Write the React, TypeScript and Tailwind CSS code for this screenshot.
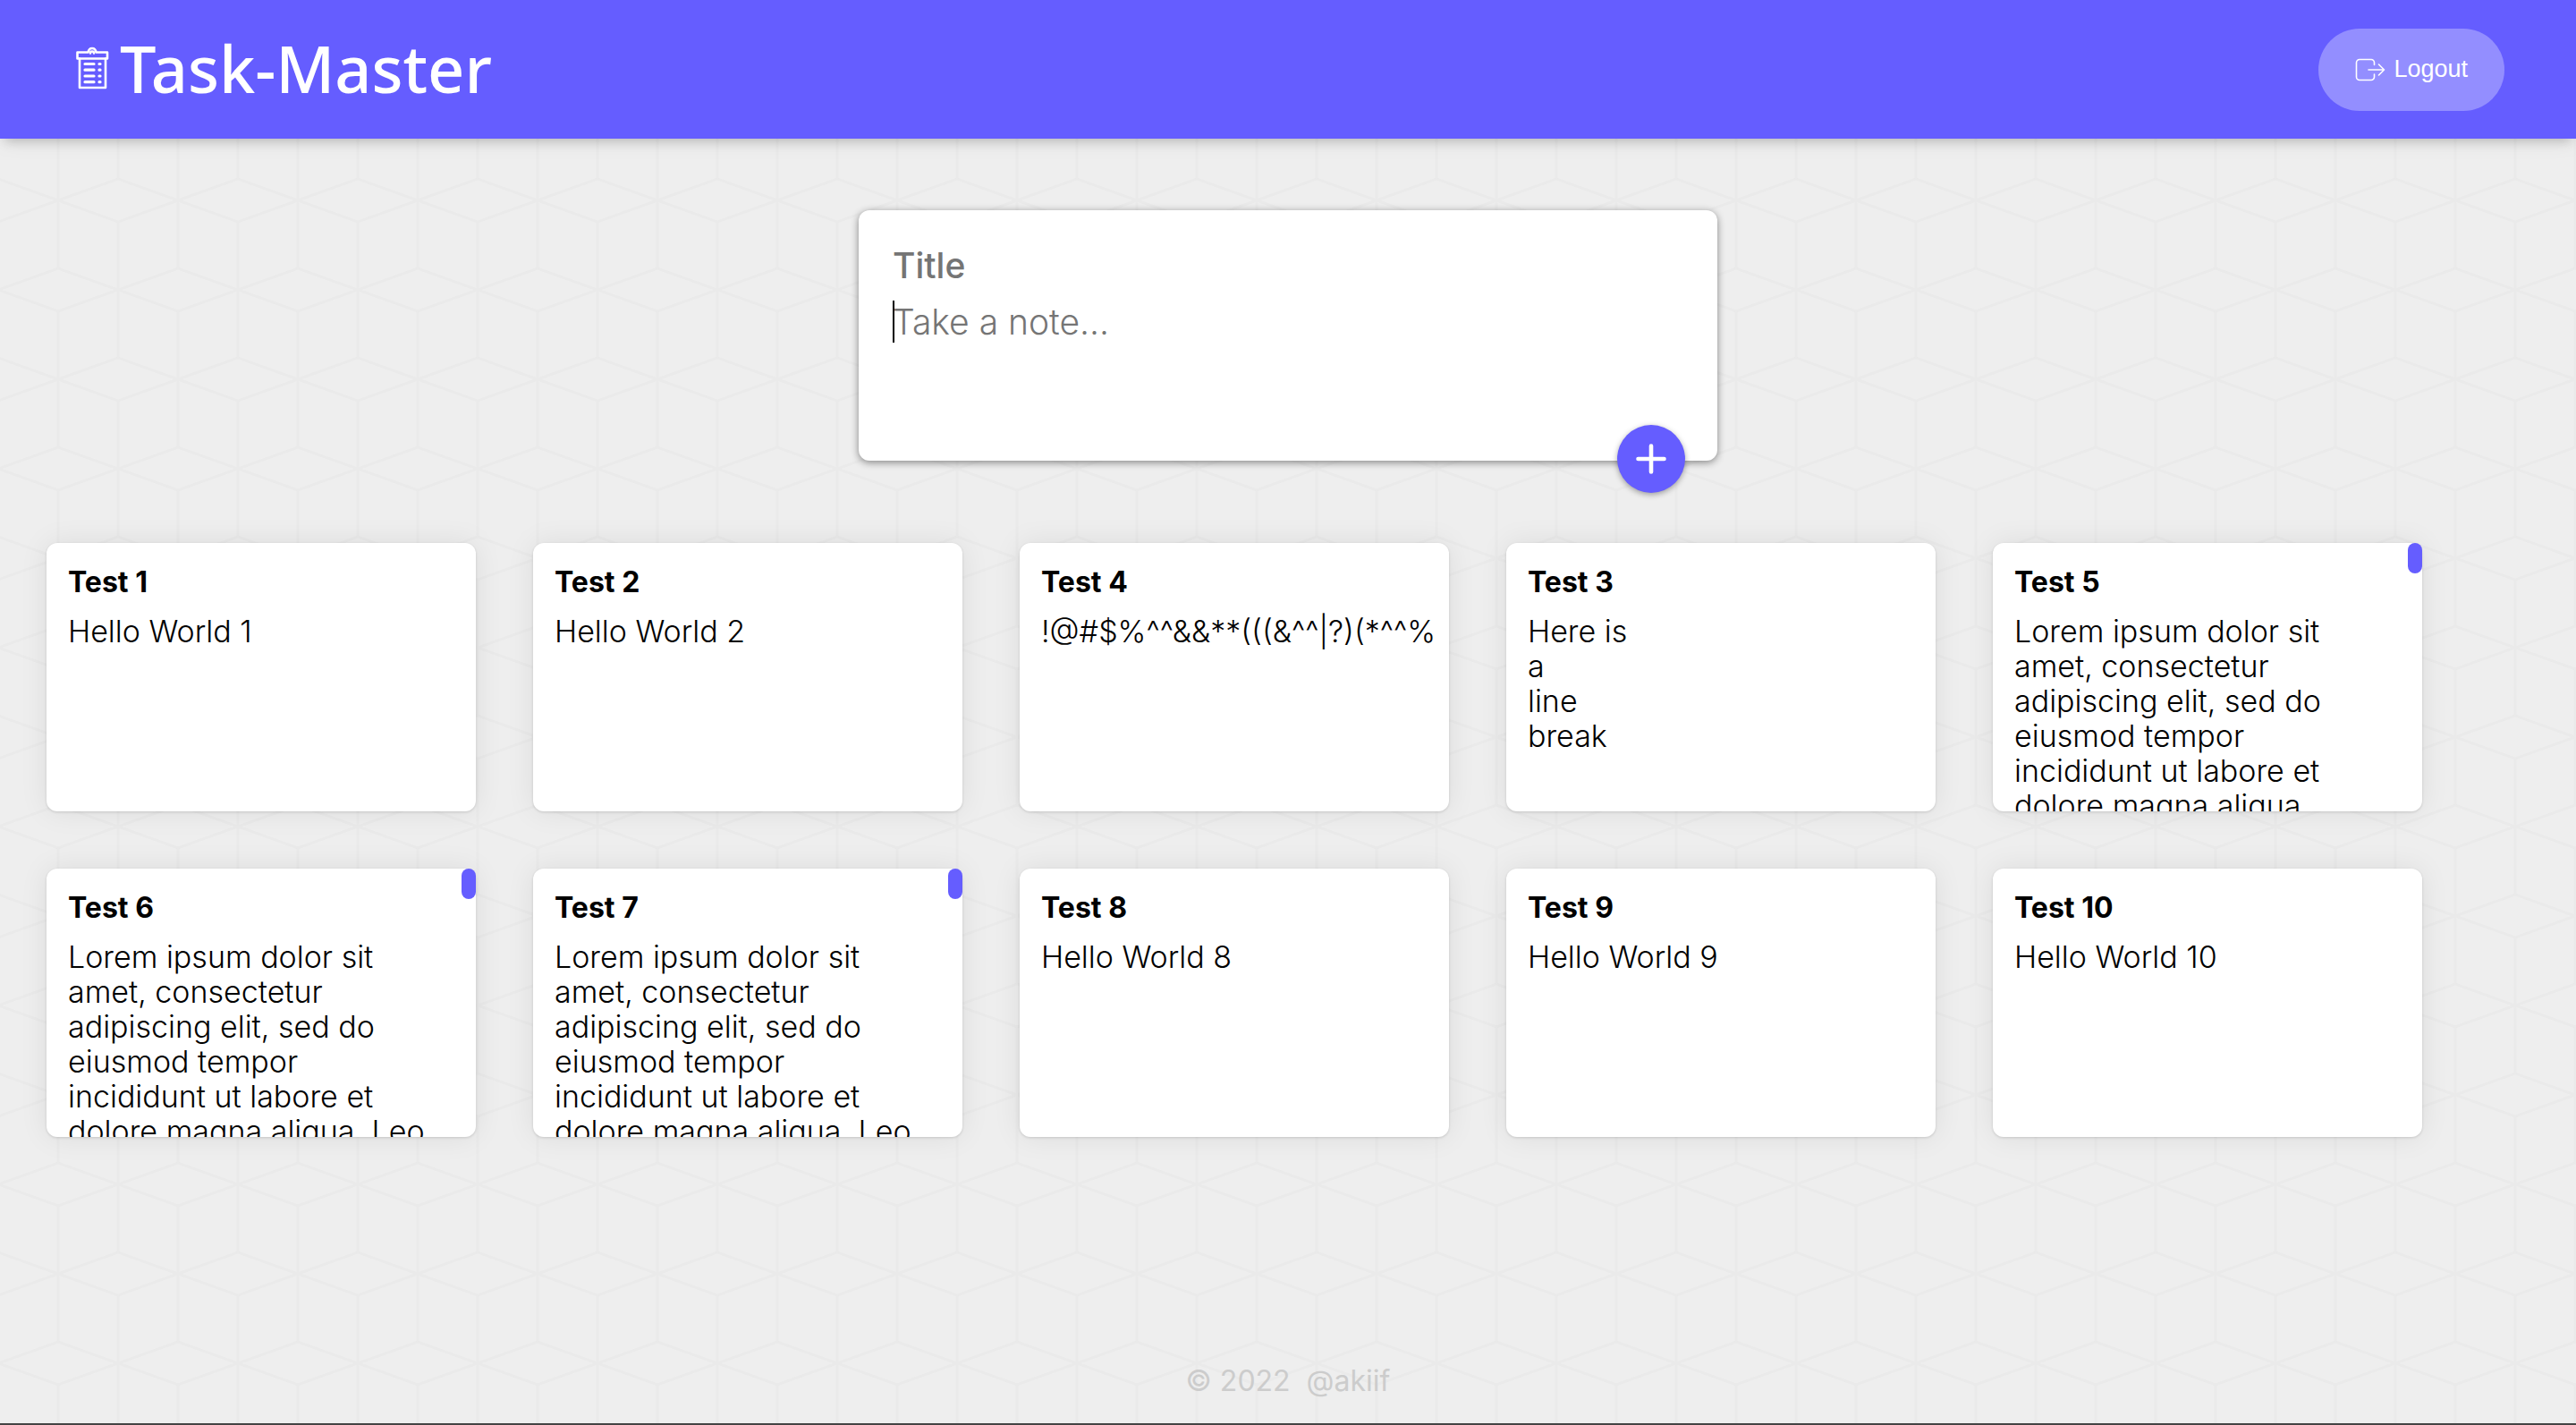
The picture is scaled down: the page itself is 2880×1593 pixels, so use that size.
type Note = { title: string; content: string; scrolls?: boolean };

const lorem =
  "Lorem ipsum dolor sit amet, consectetur adipiscing elit, sed do eiusmod tempor incididunt ut labore et dolore magna aliqua.";

const notes: Note[] = [
  { title: "Test 1", content: "Hello World 1" },
  { title: "Test 2", content: "Hello World 2" },
  { title: "Test 4", content: "!@#$%^^&&**(((&^^|?)(*^^%" },
  { title: "Test 3", content: "Here is\na\nline\nbreak" },
  { title: "Test 5", content: lorem, scrolls: true },
  { title: "Test 6", content: lorem + " Leo", scrolls: true },
  { title: "Test 7", content: lorem + " Leo", scrolls: true },
  { title: "Test 8", content: "Hello World 8" },
  { title: "Test 9", content: "Hello World 9" },
  { title: "Test 10", content: "Hello World 10" },
];

function CubePattern() {
  return (
    <svg className="absolute inset-0 -z-10 h-full w-full" aria-hidden="true">
      <defs>
        <pattern id="cubes" x="-2" y="124" width="134" height="200" patternUnits="userSpaceOnUse">
          <g fill="none" stroke="#eaeaea" strokeWidth="3">
            {/* diamonds centred on the tile's left and right edges */}
            <path d="M-67 100L0 76L67 100L0 124ZM67 100L134 76L201 100L134 124Z" />
            {/* diamonds centred in the tile, split over its top and bottom edge */}
            <path d="M0 0L67 24L134 0M0 200L67 176L134 200" />
            <path d="M67 24V176M0 0V76M134 0V76M0 124V200M134 124V200" />
          </g>
        </pattern>
      </defs>
      <rect width="100%" height="100%" fill="url(#cubes)" />
    </svg>
  );
}

function ClipboardIcon() {
  return (
    <svg className="h-[48px] w-[38px]" viewBox="0 0 38 48" fill="none" stroke="#fff" strokeWidth="2.6" strokeLinejoin="round" strokeLinecap="round" aria-hidden="true">
      <path d="M2.5 6.5H14.5C15 3.5 16.5 2 19 2S23 3.5 23.5 6.5H36V13.5H2.5Z" />
      <path d="M17 7.5a2 2 0 0 1 4 0" />
      <path d="M5 13.5V46H34V13.5" />
      <path d="M11 19.5H21M11 26.2H21M11 33H21M11 39.7H21" strokeWidth="3.2" />
      <path d="M27 19.5H28M27 26.2H28M27 33H28M27 39.7H28" strokeWidth="3.2" />
    </svg>
  );
}

function LogoutIcon() {
  return (
    <svg className="h-[26px] w-[34px]" viewBox="0 0 34 26" fill="none" stroke="#fff" strokeWidth="1.6" strokeLinecap="round" strokeLinejoin="round" aria-hidden="true">
      <path d="M21.5 7.5V5a3.5 3.5 0 0 0-3.500-3.500H5A3.500 3.500 0 0 0 1.500 5V21A3.500 3.500 0 0 0 5 24.500H18a3.500 3.500 0 0 0 3.500-3.500V18" />
      <path d="M15 13H32.500M26.500 7L32.500 13L26.500 19" />
    </svg>
  );
}

function NoteCard({ note }: { note: Note }) {
  return (
    <article className="relative h-[300px] w-[480px] rounded-xl bg-white shadow-[0_0_32px_rgba(0,0,0,0.08),0_1px_3px_rgba(0,0,0,0.14)]">
      <div className={note.scrolls ? "h-full overflow-hidden py-6 pr-10 pl-6" : "h-full overflow-hidden p-6 pr-0"}>
        <h2 className="text-[32px] leading-[39px] font-bold">{note.title}</h2>
        <p className="mt-4 text-[34px] leading-[39px] font-light whitespace-pre-line">{note.content}</p>
      </div>
      {note.scrolls && <div className="absolute top-0 right-0 h-[34px] w-4 rounded-full bg-[#655dff]" />}
    </article>
  );
}

export default function App() {
  return (
    <div className="relative isolate flex min-h-screen flex-col border-b-2 border-[#444] bg-[#eee] font-['Inter',sans-serif] text-black">
      <CubePattern />
      <header className="flex h-[155px] items-center justify-between bg-[#655dff] px-20 text-white shadow-[0_8px_12px_-6px_rgba(0,0,0,0.22),0_4px_24px_rgba(0,0,0,0.06)]">
        <h1 className="flex items-center gap-3 pb-1 pl-1 font-['Noto_Sans',sans-serif] text-[72px] leading-[88px] font-medium">
          <ClipboardIcon />
          Task-Master
        </h1>
        <button type="button" className="flex h-[92px] items-center gap-[9px] rounded-full bg-white/30 px-[41px] font-['Liberation_Sans',sans-serif] text-[27px]">
          <LogoutIcon />
          Logout
        </button>
      </header>

      <main className="flex flex-1 flex-col">
        <form className="relative mt-20 flex w-[960px] flex-col gap-4 self-center rounded-xl bg-white p-[38px] shadow-[0_2px_8px_rgba(0,0,0,0.45)]">
          <input
            aria-label="Title"
            placeholder="Title"
            className="h-[47px] w-full text-[39px] leading-[47px] font-medium outline-none placeholder:text-[#757575]"
          />
          <div className="relative flex">
            <textarea
              aria-label="Note"
              placeholder="Take a note..."
              className="h-[141px] w-full resize-none text-[39px] leading-[47px] font-light outline-none placeholder:text-[#757575]"
            />
            <span className="absolute top-0 left-0 h-[47px] w-0.5 bg-black" />
          </div>
          <button
            type="button"
            aria-label="Add note"
            className="absolute right-9 -bottom-9 flex size-[76px] items-center justify-center rounded-full bg-[#655dff] shadow-[0_2px_6px_rgba(0,0,0,0.35)]"
          >
            <svg className="size-[34px]" viewBox="0 0 34 34" stroke="#fff" strokeWidth="4.6" strokeLinecap="round" aria-hidden="true">
              <path d="M17 2.500V31.500M2.500 17H31.500" />
            </svg>
          </button>
        </form>

        <section aria-label="Notes" className="mt-[92px] flex flex-wrap gap-16 px-[52px]">
          {notes.map((note) => (
            <NoteCard key={note.title} note={note} />
          ))}
        </section>
      </main>

      <footer className="pb-7 text-center text-[32px] leading-[39px] whitespace-pre text-[#ccc]">© 2022  @akiif</footer>
    </div>
  );
}
